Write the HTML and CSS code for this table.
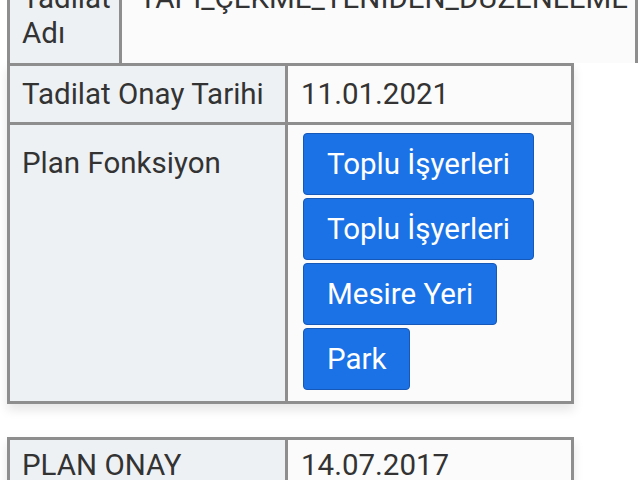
FILE: index.html
```html
<!DOCTYPE html>
<html lang="tr">
<head>
<meta charset="utf-8">
<title>Plan Bilgileri</title>
<link rel="stylesheet" href="styles.css">
</head>
<body>
<div class="page">
  <div class="tbl tbl-top">
    <div class="cell key key-top">Tadilat<br>Adı</div>
    <div class="cell val val-top">YAPI_ÇEKME_YENİDEN_DÜZENLEME</div>
  </div>

  <div class="tbl tbl-main">
    <div class="cell key">Tadilat Onay Tarihi</div>
    <div class="cell val">11.01.2021</div>
    <div class="cell key key-tall">Plan Fonksiyon</div>
    <div class="cell val val-btns">
      <span class="btn">Toplu İşyerleri</span>
      <span class="btn">Toplu İşyerleri</span>
      <span class="btn">Mesire Yeri</span>
      <span class="btn">Park</span>
    </div>
  </div>

  <div class="tbl tbl-main tbl-plan">
    <div class="cell key">PLAN ONAY</div>
    <div class="cell val">14.07.2017</div>
  </div>
</div>
</body>
</html>
```

FILE: styles.css
```css
html, body {
  margin: 0;
  padding: 0;
  background: #ffffff;
}

body {
  font-family: Roboto, "Noto Sans", "Liberation Sans", sans-serif;
  font-size: 29.5px;
  color: #333333;
  overflow: hidden;
  height: 480px;
}

.page {
  padding-left: 7px;
}

.tbl {
  display: grid;
  background: #8e8e8e;
  padding: 3px;
  gap: 3px;
  box-sizing: border-box;
}

.cell {
  line-height: 32px;
  padding: 12px 12px;
}

.key {
  background: #edf1f4;
}

.val {
  background: #fbfbfb;
  padding-left: 13px;
}

/* top, partially scrolled-off table */
.tbl-top {
  width: 631px;
  grid-template-columns: 109px 513px;
  padding-bottom: 0;
  margin-top: -34px;
}

.key-top {
  line-height: 35px;
  padding: 12px 12px 12px 12px;
}

.val-top {
  line-height: 35px;
  padding: 12px 0 12px 17px;
  white-space: nowrap;
  overflow: hidden;
}

/* main table */
.tbl-main {
  width: 567px;
  grid-template-columns: 275px 283px;
  box-shadow: 0 6px 10px rgba(0, 0, 0, 0.10);
}

.key-tall {
  padding-top: 22px;
}

.val-btns {
  display: flex;
  flex-direction: column;
  align-items: flex-start;
  gap: 3px;
  padding: 8px 12px 11px 15px;
}

.btn {
  display: inline-block;
  background: #1b72e6;
  color: #ffffff;
  border: 1px solid #1558b8;
  border-radius: 4px;
  padding: 14px 23px;
  line-height: 32px;
}

.tbl-plan {
  margin-top: 33px;
}

.tbl-plan .cell {
  padding-top: 9px;
}
```
